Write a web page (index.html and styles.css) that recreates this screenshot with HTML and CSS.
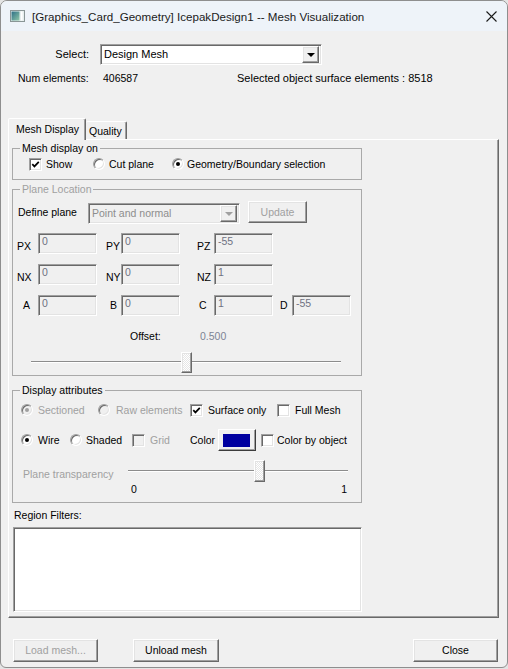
FILE: index.html
```html
<!DOCTYPE html>
<html>
<head>
<meta charset="utf-8">
<title>Mesh Visualization</title>
<link rel="stylesheet" href="styles.css">
</head>
<body>
<div class="window">
  <div class="titlebar">
    <svg class="appicon" width="15" height="12" viewBox="0 0 15 12">
      <defs>
        <linearGradient id="ig" x1="0" y1="0" x2="1" y2="1">
          <stop offset="0" stop-color="#2d6f86"/>
          <stop offset="1" stop-color="#8fc7a8"/>
        </linearGradient>
      </defs>
      <rect x="0.5" y="0.5" width="14" height="11" fill="#e6eeee" stroke="#8a9696"/>
      <rect x="1.5" y="1.5" width="8" height="9" fill="url(#ig)"/>
      <rect x="11" y="1.5" width="1.5" height="9" fill="#ffffff"/>
    </svg>
    <span class="title">[Graphics_Card_Geometry] IcepakDesign1 -- Mesh Visualization</span>
    <svg class="closex" width="11" height="11" viewBox="0 0 11 11">
      <path d="M0.5 0.5 L10.5 10.5 M10.5 0.5 L0.5 10.5" stroke="#1a1a1a" stroke-width="1.1" fill="none"/>
    </svg>
  </div>

  <div class="client">
    <div class="select-row">
      <span class="select-label">Select:</span>
      <div class="combo sunken">
        <span class="combo-text">Design Mesh</span>
        <span class="combo-btn raised"><span class="arrow"></span></span>
      </div>
    </div>

    <div class="info-row">
      <span class="num-label">Num elements:</span>
      <span class="num-val">406587</span>
      <span class="sel-info">Selected object surface elements : 8518</span>
    </div>

    <div class="tabs">
      <div class="tab active">Mesh Display</div>
      <div class="tab">Quality</div>
    </div>

    <div class="panel">
      <fieldset class="group g1">
        <legend>Mesh display on</legend>
        <div class="g1-row">
          <label class="opt o-show"><span class="cb"><svg width="9" height="9" viewBox="0 0 9 9"><polyline points="1.3,4.2 3.4,6.4 7.8,1.8" fill="none" stroke="#000" stroke-width="1.7"/></svg></span>Show</label>
          <label class="opt o-cut"><span class="rb"></span>Cut plane</label>
          <label class="opt o-geo"><span class="rb on"><span class="dot"></span></span>Geometry/Boundary selection</label>
        </div>
      </fieldset>

      <fieldset class="group g2">
        <legend class="dis">Plane Location</legend>
        <div class="define-row">
          <span class="define-label">Define plane</span>
          <div class="combo combo-dis sunken">
            <span class="combo-text">Point and normal</span>
            <span class="combo-btn raised"><span class="arrow arrow-dis"></span></span>
          </div>
          <span class="btn raised btn-update">Update</span>
        </div>

        <div class="fgrid r1">
          <span class="fl l-px">PX</span><span class="tb sunken">0</span>
          <span class="fl l-py">PY</span><span class="tb sunken">0</span>
          <span class="fl l-pz">PZ</span><span class="tb sunken">-55</span>
        </div>
        <div class="fgrid r2">
          <span class="fl l-px">NX</span><span class="tb sunken">0</span>
          <span class="fl l-py">NY</span><span class="tb sunken">0</span>
          <span class="fl l-pz">NZ</span><span class="tb sunken">1</span>
        </div>
        <div class="fgrid r3">
          <span class="fl l-a">A</span><span class="tb sunken">0</span>
          <span class="fl l-b">B</span><span class="tb sunken">0</span>
          <span class="fl l-c">C</span><span class="tb sunken">1</span>
          <span class="fl l-d">D</span><span class="tb sunken">-55</span>
        </div>

        <div class="offset-row">
          <span class="offset-label">Offset:</span>
          <span class="offset-val">0.500</span>
        </div>
        <div class="slider s1">
          <span class="thumb raised"></span>
        </div>
      </fieldset>

      <fieldset class="group g3">
        <legend>Display attributes</legend>
        <div class="g3-row1">
          <label class="opt dis o-sec"><span class="rb rb-dis"><span class="dot"></span></span>Sectioned</label>
          <label class="opt dis o-raw"><span class="rb rb-dis"></span>Raw elements</label>
          <label class="opt o-surf"><span class="cb"><svg width="9" height="9" viewBox="0 0 9 9"><polyline points="1.3,4.2 3.4,6.4 7.8,1.8" fill="none" stroke="#000" stroke-width="1.7"/></svg></span>Surface only</label>
          <label class="opt o-full"><span class="cb"></span>Full Mesh</label>
        </div>
        <div class="g3-row2">
          <label class="opt o-wire"><span class="rb on"><span class="dot"></span></span>Wire</label>
          <label class="opt o-shaded"><span class="rb"></span>Shaded</label>
          <label class="opt dis o-grid"><span class="cb cb-dis"></span>Grid</label>
          <span class="color-label">Color</span>
          <span class="color-btn"><span class="swatch"></span></span>
          <label class="opt o-cbo"><span class="cb"></span>Color by object</label>
        </div>
        <div class="g3-row3">
          <span class="pt-label">Plane transparency</span>
          <div class="slider s2">
            <span class="thumb raised"></span>
          </div>
        </div>
        <div class="g3-row4">
          <span>0</span><span>1</span>
        </div>
      </fieldset>

      <div class="region-label">Region Filters:</div>
      <div class="listbox sunken"></div>
    </div>

    <div class="bottom-row">
      <span class="btn raised btn-load">Load mesh...</span>
      <span class="btn raised btn-unload">Unload mesh</span>
      <span class="btn raised btn-close">Close</span>
    </div>
  </div>
</div>
</body>
</html>
```

FILE: styles.css
```css
* { box-sizing: border-box; }
html, body { margin: 0; padding: 0; }
body {
  width: 508px;
  height: 669px;
  overflow: hidden;
  background: #e4e4e4;
  font-family: "Liberation Sans", Arial, sans-serif;
  font-size: 10.5px;
  line-height: 13px;
  color: #000;
}

.window {
  width: 508px;
  height: 668px;
  border: 1px solid #8e8e8e;
  border-radius: 7px 7px 6px 6px;
  background: #f0f0f0;
  overflow: hidden;
}

/* title bar */
.titlebar {
  height: 30px;
  background: #eef3f9;
  display: flex;
  align-items: center;
}
.appicon { margin-left: 9px; flex: none; }
.title {
  margin-left: 7px;
  font-family: "Liberation Sans", Arial, sans-serif;
  font-size: 11.6px;
  color: #1b1b1b;
  white-space: nowrap;
}
.closex { margin-left: auto; margin-right: 10px; flex: none; }

/* shared 3D borders */
.sunken {
  border: 1px solid;
  border-color: #a0a0a0 #ffffff #ffffff #a0a0a0;
  box-shadow: inset 1px 1px 0 #696969, inset -1px -1px 0 #e3e3e3;
}
.raised {
  border: 1px solid;
  border-color: #ffffff #696969 #696969 #ffffff;
  box-shadow: inset -1px -1px 0 #a0a0a0, inset 1px 1px 0 #e3e3e3;
  background: #f0f0f0;
}

/* select row */
.select-row {
  margin-top: 13px;
  height: 21px;
  display: flex;
  align-items: center;
  font-size: 11px;
}
.select-label { width: 88px; text-align: right; }
.combo {
  margin-left: 11px;
  width: 222px;
  height: 21px;
  background: #fff;
  display: flex;
  align-items: center;
  padding: 0 2px 0 3px;
}
.combo-text { flex: 1; white-space: nowrap; }
.combo-btn {
  width: 17px;
  height: 17px;
  display: flex;
  align-items: center;
  justify-content: center;
  flex: none;
}
.arrow {
  width: 0; height: 0;
  border-left: 4px solid transparent;
  border-right: 4px solid transparent;
  border-top: 4px solid #000;
  margin-top: 1px;
}
.arrow-dis { border-top-color: #a0a0a0; }

/* info */
.info-row {
  margin-top: 7px;
  height: 13px;
  display: flex;
  padding-left: 17px;
  white-space: nowrap;
}
.num-label { width: 85px; }
.num-val { width: 134px; }
.sel-info { font-size: 11px; }

/* tabs */
.tabs {
  margin-top: 33px;
  height: 21px;
  display: flex;
  align-items: flex-end;
  padding-left: 7px;
}
.tab {
  border: 1px solid;
  border-bottom: none;
  border-color: #ffffff #696969 transparent #ffffff;
  box-shadow: inset -1px 0 0 #a0a0a0;
  border-radius: 2px 2px 0 0;
  background: #f0f0f0;
  white-space: nowrap;
}
.tab.active {
  width: 78px;
  height: 22px;
  margin-bottom: -1px;
  padding: 4px 0 0 7px;
  position: relative;
  z-index: 1;
}
.tab:not(.active) {
  width: 41px;
  height: 18px;
  padding: 3px 0 0 3px;
  border-left: none;
}

/* panel */
.panel {
  margin-left: 7px;
  width: 491px;
  height: 479px;
  border: 1px solid;
  border-color: #ffffff #696969 #696969 #ffffff;
  box-shadow: inset -1px -1px 0 #a0a0a0;
  padding: 2px 0 0 3px;
}

/* group boxes */
.group {
  margin: 0;
  padding: 0;
  width: 350px;
  border: 1px solid #a9a9a9;
  min-width: 0;
}
.group legend {
  margin-left: 7px;
  padding: 0 2px;
  line-height: 13px;
  height: 13px;
}
.dis, legend.dis { color: #a0a0a0; }

.opt {
  display: flex;
  align-items: center;
  gap: 4px;
  flex: none;
  white-space: nowrap;
}
.cb {
  width: 13px;
  height: 13px;
  background: #fff;
  border: 1px solid;
  border-color: #a0a0a0 #ffffff #ffffff #a0a0a0;
  box-shadow: inset 1px 1px 0 #696969, inset -1px -1px 0 #e3e3e3;
  display: flex;
  align-items: center;
  justify-content: center;
  flex: none;
}
.cb-dis { background: #f0f0f0; }
.rb {
  width: 12px;
  height: 12px;
  border-radius: 50%;
  background: #fff;
  border: 1px solid;
  border-color: #a0a0a0 #ffffff #ffffff #a0a0a0;
  box-shadow: inset 1px 1px 0 #696969, inset -1px -1px 0 #e3e3e3;
  display: flex;
  align-items: center;
  justify-content: center;
  flex: none;
}
.rb .dot {
  width: 4px;
  height: 4px;
  border-radius: 50%;
  background: #000;
}
.rb-dis { background: #f0f0f0; }
.rb-dis .dot { background: #a0a0a0; }

/* group 1 */
.g1 { margin-top: 0; }
.g1-row {
  display: flex;
  align-items: center;
  height: 14px;
  margin: 2px 0 8px;
  padding-left: 16px;
}
.o-show { width: 64px; }
.o-cut { width: 79px; }
.o-geo { gap: 3px; }

/* group 2 */
.g2 { margin-top: 3px; }
.define-row {
  margin-top: 5px;
  height: 23px;
  display: flex;
  align-items: flex-start;
  padding-left: 5px;
}
.define-label { width: 70px; margin-top: 5px; white-space: nowrap; }
.combo-dis {
  margin-left: 0;
  margin-top: 2px;
  width: 152px;
  background: #f0f0f0;
  color: #8d8d8d;
}
.btn {
  height: 23px;
  display: flex;
  align-items: center;
  justify-content: center;
  white-space: nowrap;
}
.btn-update {
  margin-left: 8px;
  width: 59px;
  height: 22px;
  color: #a0a0a0;
}

.fgrid {
  display: grid;
  grid-template-columns: 25px 59px 24px 59px 34px 59px 19px 59px;
  height: 21px;
  margin-top: 10px;
}
.fgrid.r1 { margin-top: 9px; }
.fl { align-self: end; padding-bottom: 1px; white-space: nowrap; }
.r3 .fl { align-self: center; padding-bottom: 0; }
.l-px { padding-left: 4px; }
.l-py { padding-left: 9px; }
.l-pz { padding-left: 17px; }
.l-a { padding-left: 10px; }
.l-b { padding-left: 13px; }
.l-c { padding-left: 19px; }
.l-d { padding-left: 7px; }
.tb {
  height: 21px;
  background: #f0f0f0;
  color: #6f7282;
  padding: 1px 0 0 3px;
  white-space: nowrap;
}

.offset-row {
  margin-top: 14px;
  height: 13px;
  display: flex;
  padding-left: 117px;
}
.offset-label { width: 70px; }
.offset-val { color: #7d8494; }

.slider {
  height: 21px;
  display: flex;
}
.s1 {
  margin: 9px 0 2px 18px;
  width: 310px;
  background:
    linear-gradient(#8c8c8c, #8c8c8c) 0 9px / 100% 1px no-repeat,
    linear-gradient(#ffffff, #ffffff) 0 10px / 100% 1px no-repeat;
}
.thumb {
  width: 11px;
  height: 21px;
  flex: none;
  background:
    repeating-conic-gradient(#e6e6e6 0 25%, #ffffff 0 50%) 0 0 / 2px 2px;
}
.s1 .thumb { margin-left: 150px; }

/* group 3 */
.g3 { margin-top: 8px; }
.g3-row1 {
  margin-top: 6px;
  height: 14px;
  display: flex;
  align-items: center;
  padding-left: 8px;
}
.o-sec { width: 77px; gap: 5px; }
.o-raw { width: 92px; gap: 6px; }
.o-surf { width: 87px; gap: 5px; }
.o-full { gap: 5px; }

.g3-row2 {
  margin-top: 12px;
  height: 22px;
  display: flex;
  align-items: center;
  padding-left: 8px;
}
.o-wire { width: 49px; gap: 5px; }
.o-shaded { width: 62px; }
.o-grid { width: 58px; gap: 5px; }
.color-label { width: 28px; }
.color-btn {
  width: 38px;
  height: 22px;
  border: 1px solid;
  border-color: #ffffff #3c3c3c #3c3c3c #ffffff;
  box-shadow: inset -1px -1px 0 #a0a0a0;
  padding: 4px 0 0 4px;
  flex: none;
}
.swatch {
  display: block;
  width: 27px;
  height: 13px;
  background: #0000a0;
}
.o-cbo { margin-left: 5px; gap: 3px; }

.g3-row3 {
  margin-top: 9px;
  height: 22px;
  display: flex;
}
.pt-label {
  width: 115px;
  padding-left: 10px;
  align-self: end;
  padding-bottom: 1px;
  color: #a0a0a0;
  white-space: nowrap;
}
.s2 {
  width: 220px;
  height: 22px;
  background:
    linear-gradient(#8c8c8c, #8c8c8c) 0 10px / 100% 1px no-repeat,
    linear-gradient(#ffffff, #ffffff) 0 11px / 100% 1px no-repeat;
}
.s2 .thumb { margin-left: 126px; height: 22px; }

.g3-row4 {
  margin: 1px 0 6px 118px;
  width: 216px;
  height: 13px;
  display: flex;
  justify-content: space-between;
}

.region-label {
  margin-top: 6px;
  height: 13px;
  padding-left: 2px;
}
.listbox {
  margin-top: 5px;
  margin-left: 1px;
  width: 349px;
  height: 85px;
  background: #fff;
}

/* bottom buttons */
.bottom-row {
  margin-top: 21px;
  height: 23px;
  display: flex;
  padding-left: 12px;
}
.btn-load { width: 85px; color: #a0a0a0; }
.btn-unload { width: 86px; margin-left: 35px; }
.btn-close { width: 85px; margin-left: auto; margin-right: 9px; }
```
